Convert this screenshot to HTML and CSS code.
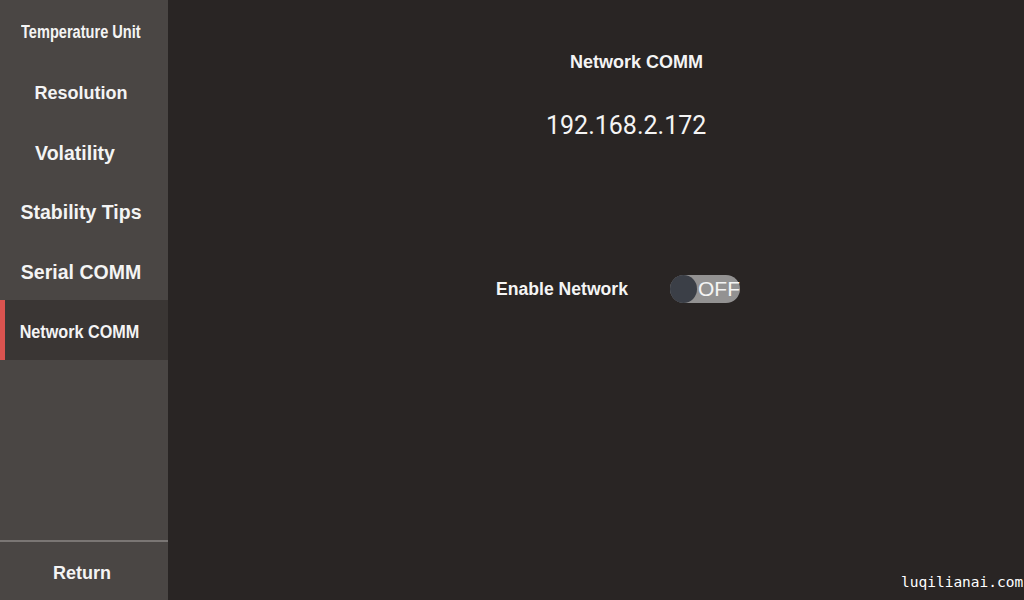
FILE: index.html
```html
<!DOCTYPE html>
<html lang="en">
<head>
  <meta charset="UTF-8" />
  <meta name="viewport" content="width=device-width, initial-scale=1.0" />
  <title>Settings - Network COMM</title>
  <link rel="stylesheet" href="styles.css">
</head>
<body>
  <div class="app">
    <nav class="sidebar">
      <ul class="menu">
        <li class="menu-item"><span class="squeeze narrow">Temperature Unit</span></li>
        <li class="menu-item small">Resolution</li>
        <li class="menu-item shift-left">Volatility</li>
        <li class="menu-item">Stability Tips</li>
        <li class="menu-item">Serial COMM</li>
        <li class="menu-item small active"><span class="squeeze">Network COMM</span></li>
      </ul>
      <div class="return">Return</div>
    </nav>

    <main class="content">
      <h2 class="page-title">Network COMM</h2>
      <p class="ip-address">192.168.2.172</p>
      <div class="setting-row">
        <span class="setting-label">Enable Network</span>
        <div class="switch">
          <span class="knob"></span>
          <span class="switch-text">OFF</span>
        </div>
      </div>
    </main>
  </div>
  <div class="watermark">luqilianai.com</div>
</body>
</html>
```

FILE: styles.css
```css
/* CSS Reset */
* {
  margin: 0;
  padding: 0;
  box-sizing: border-box;
}
body {
  font-family: "Liberation Sans", Arial, sans-serif;
  background-color: #292524;
  color: #f4f4f4;
  width: 1024px;
  height: 600px;
  overflow: hidden;
}
.app {
  display: flex;
  height: 600px;
}
.sidebar {
  width: 168px;
  background-color: #4a4644;
  display: flex;
  flex-direction: column;
  justify-content: space-between;
}
.menu {
  list-style: none;
}
.menu-item {
  height: 60px;
  display: flex;
  align-items: center;
  justify-content: center;
  padding: 4px 6px 0 0;
  font-size: 19.5px;
  font-weight: bold;
  white-space: nowrap;
}
.menu-item.small {
  font-size: 18px;
  padding-top: 6px;
}
.menu-item.shift-left {
  padding-right: 18px;
  padding-top: 6px;
}
.menu-item.active {
  background-color: #3a3634;
  border-left: 5px solid #d9534f;
  padding-right: 13px;
  padding-top: 4px;
}
.squeeze {
  display: inline-block;
  transform: scaleX(0.9);
}
.squeeze.narrow {
  font-size: 18px;
  transform: scaleX(0.81);
}
.return {
  height: 60px;
  border-top: 2px solid #7a7674;
  display: flex;
  align-items: center;
  justify-content: center;
  padding-top: 4px;
  padding-right: 4px;
  font-size: 18px;
  font-weight: bold;
}
.content {
  flex: 1;
  display: flex;
  flex-direction: column;
  align-items: flex-start;
  padding-top: 51px;
}
.page-title {
  margin-left: 402px;
  font-size: 18px;
  font-weight: bold;
  line-height: 22px;
}
.ip-address {
  margin-left: 378px;
  margin-top: 39px;
  font-family: Roboto, "Liberation Sans", sans-serif;
  font-size: 25px;
  line-height: 28px;
}
.setting-row {
  margin-left: 328px;
  margin-top: 135px;
  display: flex;
  align-items: center;
  gap: 42px;
}
.setting-label {
  font-size: 17.6px;
  font-weight: bold;
}
.switch {
  width: 70px;
  height: 28px;
  border-radius: 14px;
  background-color: #939292;
  display: flex;
  align-items: center;
}
.knob {
  width: 28px;
  height: 28px;
  border-radius: 50%;
  background-color: #3b3f47;
}
.switch-text {
  margin-left: 1px;
  font-size: 21px;
  color: #f4f4f4;
}
.watermark {
  position: absolute;
  left: 901px;
  top: 574px;
  font-family: "DejaVu Sans Mono", monospace;
  font-size: 14.5px;
  color: #ffffff;
  white-space: nowrap;
}
```
